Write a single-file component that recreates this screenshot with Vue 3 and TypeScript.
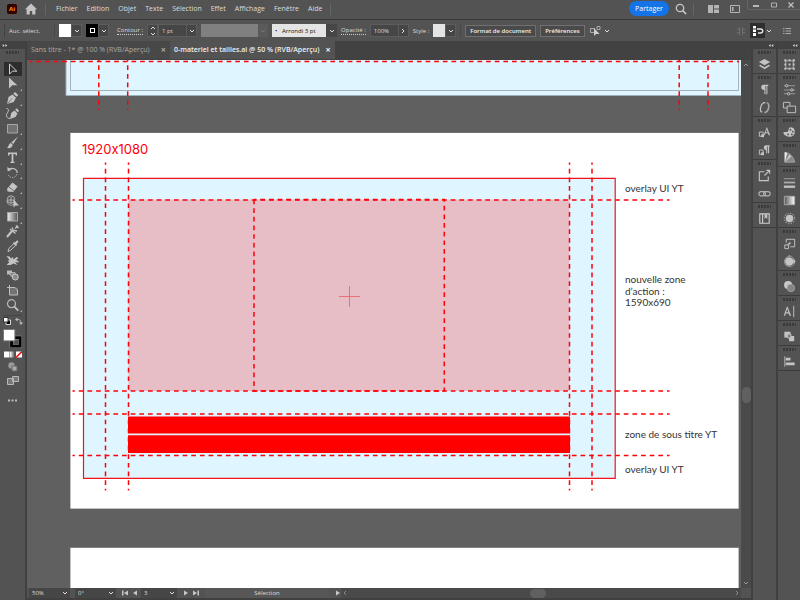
<script setup lang="ts">
import { ref } from 'vue'

interface Tool {
  name: string
  icon: string
  more?: boolean
}

const menus: string[] = ['Fichier', 'Edition', 'Objet', 'Texte', 'Sélection', 'Effet', 'Affichage', 'Fenêtre', 'Aide']

const tools: Tool[] = [
  { name: 'Sélection', icon: '<path d="M4.5 2v10l3-2.800h4.300z" fill="none" stroke="#d0d0d0"/>' },
  { name: 'Sélection directe', more: true, icon: '<path d="M4 1.500v11l3.300-3.200h5z"/>' },
  { name: 'Plume', more: true, icon: '<path d="M2 13l1.500-7 4-2.500 3.500 3.300-2.300 4.200zM8.300 2.700L10 1l3.200 3-1.500 1.800z"/><path d="M2.500 12.500L7 7.500" stroke="#535353" stroke-width=".7"/>' },
  { name: 'Courbure', icon: '<path d="M5 13l1.200-6 3.300-2.500 3 3-2 3.500zM10.200 3.800l1.300-1.600 2.700 2.600-1.500 1.500z"/><path d="M1.500 2.500c3 0 2 3 .5 5s0 5 3 5" fill="none" stroke="#c4c4c4"/>' },
  { name: 'Rectangle', more: true, icon: '<path d="M2.500 3.500h10v8.500h-10z" fill="#737373" stroke="#a6a6a6"/>' },
  { name: 'Pinceau', more: true, icon: '<path d="M13 1.500L8.200 9 6.300 7.500zM5.700 8l2 1.700c-.5 3-3 3.800-5.700 3.300 1.500-.8 1.200-3.800 3.700-5z"/>' },
  { name: 'Texte', more: true, icon: '<path d="M3 2.500h9V5.500h-1.200L10.300 4H8.400v7.500l1.300.8v.7H5.300v-.7l1.300-.8V4H4.700l-.5 1.500H3z"/>' },
  { name: 'Rotation', more: true, icon: '<path d="M3.500 5c3-3.500 9-1 8.700 3" fill="none" stroke="#c4c4c4" stroke-width="1.200"/><path d="M12 9c-1 4-7 5-8.700 1" fill="none" stroke="#a8a8a8" stroke-dasharray="1.500 1"/><path d="M2.300 2l.3 4.300 4-1.300z"/>' },
  { name: 'Gomme', more: true, icon: '<path d="M7.500 2.500l5 4-4.200 5.500-5.800-.5-.5-2.800z"/><path d="M4 7l5 4" stroke="#535353" stroke-width=".8"/>' },
  { name: 'Concepteur de forme', more: true, icon: '<g fill="none" stroke="#b4b4b4"><circle cx="6" cy="5.500" r="3.700"/><path d="M2 6.500c0 6 8 6 8 1M3 6h6M6 3v6"/></g><path d="M8.500 5.500v8l2-2h3.500z"/>' },
  { name: 'Dégradé', more: true, icon: '<defs><linearGradient id="tg"><stop stop-color="#eee"/><stop offset="1" stop-color="#555"/></linearGradient></defs><path d="M2.500 3.500h10V12h-10z" fill="url(#tg)" stroke="#aaa"/>' },
  { name: 'Cotes', icon: '<path d="M2 13l5-6" stroke="#c4c4c4" stroke-width="2"/><path d="M5 5l5.500 4.500M7 3.500l1.500 3 3.500.5M10 4.500L13 2M11 1.500l2.500 2.500" stroke="#c4c4c4" stroke-width="1.300" fill="none"/>' },
  { name: 'Pipette', icon: '<path d="M3 12.500l.8-3L9 4.500l1.800 1.800-5.300 5z" fill="none" stroke="#c4c4c4"/><path d="M8 4l1-1 1 .5 1.500-1.800c1.500-.7 2.200.5 1.500 1.800L11.500 5l.5 1-1 1z"/>' },
  { name: 'Marionnette', icon: '<path d="M1.500 3l3 .5L6 5.500l2-1.500.5 2.500 3-2.500 2 1-2.500 2 2.500 1v1.500L10 9l2.500 3-4-1.500-3 1.500H1.500L4.500 9 2.500 8l2-1z"/>' },
  { name: 'Dégradé de formes', icon: '<path d="M2 2.500h5v4H2z" fill="#b8b8b8"/><path d="M4.500 4.500H10l1 4H6z" fill="#8c8c8c" stroke="#c4c4c4" stroke-width=".7"/><circle cx="10.300" cy="9" r="3" fill="#8c8c8c" stroke="#c8c8c8"/>' },
  { name: 'Plan de travail', icon: '<path d="M4 4.500h8.500V12H4z" fill="#737373"/><path d="M2 4.500h8l2.500 2.500v5h-8V2" fill="none" stroke="#bdbdbd"/>' },
  { name: 'Zoom', more: true, icon: '<circle cx="6.500" cy="5.700" r="4" fill="none" stroke="#b8b8b8" stroke-width="1.200"/><path d="M9.300 8.700l4 4" stroke="#c4c4c4" stroke-width="1.800"/>' },
]

const dockA: Tool[][] = [
  [{ name: 'Calques', icon: '<path d="M8 2l6 3.300-6 3.400-6-3.400z"/><path d="M3.500 8.200L2 9.200 8 13l6-3.800-1.500-1L8 11z"/>' }],
  [
    { name: 'Paragraphe', icon: '<path d="M7 3h5v1.200h-.900V13H10V4.200H9V13H7.900V8.500C3.500 8.500 3.500 3 7 3z"/>' },
    { name: 'OpenType', icon: '<path d="M9 3C4 2 2 12 5.500 13" fill="none" stroke="#c4c4c4" stroke-width="1.300"/><path d="M8 13.500c5-1 6-10 2.500-10.500" fill="none" stroke="#aaa" stroke-width="1.700"/>' },
  ],
  [
    { name: 'Styles de caractères', icon: '<path d="M10.500 2L14 11h-1.500l-.8-2.200H9L8.200 11H7zm-.200 2.500L9.400 7.700h1.900z"/><path d="M2.500 7.500h4V12h-4z" fill="none" stroke="#c4c4c4"/><path d="M4.500 10h3v3h-3z"/>' },
    { name: 'Styles de paragraphes', icon: '<path d="M9.500 2.500h4V3.700h-.6V11h-1.200V3.700h-.8V11H9.700V7.500c-3.200 0-3.200-5-.2-5z"/><path d="M2.500 7.500h4V12h-4z" fill="none" stroke="#c4c4c4"/><path d="M4.500 10h3v3h-3z"/>' },
  ],
  [
    { name: 'Exportation', icon: '<path d="M8 4H2.500v9.500H12V9M10 2.500h3.500V6M13.500 2.500L8 8" fill="none" stroke="#c4c4c4" stroke-width="1.200"/>' },
    { name: 'Liens', icon: '<rect x="2" y="6" width="7" height="4.500" rx="2.200" fill="none" stroke="#b4b4b4" stroke-width="1.200"/><rect x="7" y="6" width="7" height="4.500" rx="2.200" fill="none" stroke="#b4b4b4" stroke-width="1.200"/>' },
  ],
  [{ name: 'Bibliothèques', icon: '<path d="M3 3h10v10H3zM6 3v10" fill="none" stroke="#d0d0d0" stroke-width="1.200"/><path d="M8 3.500h3v5L9.500 7 8 8.500z"/>' }],
]

const dockB: Tool[][] = [
  [{ name: 'Transformation', icon: '<path d="M4 4h8v8H4z" fill="none" stroke="#b0b0b0"/><path d="M2.500 2.500h2.200v2.200H2.500zM7 2.500h2v2H7zM11.500 2.500h2.200v2.200h-2.200zM2.500 7h2v2h-2zM11.500 7h2v2h-2zM2.500 11.500h2.200v2.200H2.500zM7 11.500h2v2H7zM11.500 11.500h2.200v2.200h-2.200zM7 7h2v2H7z"/>' }],
  [
    { name: 'Propriétés', icon: '<path d="M2 4h12M2 8.500h12M2 12.500h12" stroke="#9c9c9c"/><g fill="#535353" stroke="#c4c4c4"><circle cx="5" cy="4" r="1.300"/><circle cx="10.500" cy="8.500" r="1.300"/><circle cx="7" cy="12.500" r="1.300"/></g>' },
    { name: 'Pathfinder', icon: '<path d="M1.500 2.500h7v6h-7z" fill="none" stroke="#c4c4c4"/><path d="M5.500 6.500h9v7h-9z" fill="#535353" stroke="#c4c4c4"/>' },
  ],
  [{ name: 'Couleur', icon: '<path d="M9 2.500c4 0 5 3 4.500 6s-3 4.500-6 4-6-2.500-6-4 2-1 4-1 1-5 3.500-5z"/><g fill="#535353"><circle cx="9" cy="5" r="1"/><circle cx="11.500" cy="7" r="1"/><circle cx="10.500" cy="10" r="1"/><circle cx="6.500" cy="10" r="1"/></g>' }],
  [{ name: 'Guide des couleurs', icon: '<path d="M3 13V2.500C8 3 12.500 7 13.500 13z" fill="#888" stroke="#bbb" stroke-width=".7"/><path d="M3 13V2.500l2.500.7z" fill="#eee"/><path d="M3 13l5-8 2 2z" fill="#ccc"/>' }],
  [
    { name: 'Contour', icon: '<path d="M2 4h12" stroke="#a8a8a8"/><path d="M2 8h12" stroke="#a8a8a8" stroke-width="2"/><path d="M2 12.500h12" stroke="#c0c0c0" stroke-width="2.500"/>' },
    { name: 'Dégradé', icon: '<defs><linearGradient id="dg"><stop stop-color="#555"/><stop offset=".9" stop-color="#eee"/></linearGradient></defs><path d="M2.500 3.500h11v9h-11z" fill="url(#dg)" stroke="#aaa"/>' },
    { name: 'Transparence', icon: '<circle cx="8" cy="8" r="4"/><circle cx="8" cy="8" r="5.500" fill="none" stroke="#999" stroke-width="1.500" stroke-dasharray="1.300 1.580"/>' },
  ],
  [
    { name: 'Exportation de ressources', icon: '<path d="M4.500 7V3.500h9v8H9" fill="none" stroke="#c4c4c4"/><path d="M3 9.500h4v4H3z" fill="none" stroke="#c4c4c4"/><path d="M5 9l4-3v3z"/>' },
    { name: 'Redéfinir les couleurs', icon: '<circle cx="7.700" cy="8" r="4.500"/><circle cx="8" cy="8" r="5.500" fill="none" stroke="#999"/><path d="M12 5l2.500 3-2.500 3zM6.500 2l1.500-.8L9.500 2z"/>' },
  ],
  [{ name: 'Aspect', icon: '<circle cx="6.500" cy="6.500" r="4.300" fill="#c8c8c8"/><circle cx="9.500" cy="9.500" r="4" fill="#858585" stroke="#aaa" stroke-width=".7"/>' }],
  [{ name: 'Caractère', icon: '<path d="M6 3L9.700 12.500H8.100L7.200 10H4L3.100 12.500H1.800L5.200 3zm-.4 2L4.400 8.700h2.400z"/><path d="M12.500 2v12" stroke="#c4c4c4"/>' }],
  [{ name: 'Formes', icon: '<path d="M2.500 3h6.500v2.500H6V9H2.500z"/><path d="M7 6.500h2.500v1H13V13H7.500V9.500H7z" /><path d="M6 5.500h3.500v4H6z" fill="#777" stroke="#c4c4c4"/>' }],
  [{ name: 'Alignement', icon: '<path d="M3 2.500v11" stroke="#bbb"/><path d="M4 4h5v3H4zM4 9h9.500v3H4z"/>' }],
]

const fullDash = [105.5, 128.5, 569.5, 592]
const rowDash = [200, 391, 414, 455.6]

const activeTool = ref<string>('Sélection')
const strokeWeight = ref<string>('1 pt')
const opacity = ref<string>('100%')
</script>

<template>
  <div class="app">
    <header class="menubar">
      <span class="logo">Ai</span>
      <button class="plain" aria-label="Accueil">
        <svg class="home" viewBox="0 0 12 12"><path d="M6 .500L0 6.300h1.600V11.500h3.200V8h2.400v3.500h3.200V6.300H12z" /></svg>
      </button>
      <i class="rule"></i>
      <nav class="menus">
        <a v-for="m in menus" :key="m" href="#">{{ m }}</a>
      </nav>
      <i class="rule"></i>
      <div class="top-right">
        <button class="share">Partager</button>
        <button class="plain" aria-label="Rechercher">
          <svg class="s12" viewBox="0 0 12 12"><circle cx="5" cy="5" r="3.700" fill="none" stroke="#c8c8c8" stroke-width="1.300" /><path d="M7.700 7.700L11 11" stroke="#c8c8c8" stroke-width="1.700" /></svg>
        </button>
        <i class="rule"></i>
        <button class="plain layout" aria-label="Réorganiser">
          <svg class="s12" viewBox="0 0 12 12"><path d="M1 2h5v8H1zM7 2h5v3.500H7zM7 6.500h5V10H7z" fill="#b4b4b4" /></svg>
        </button>
        <button class="plain" aria-label="Espace de travail">
          <svg class="s12" viewBox="0 0 12 12"><path d="M1.500 2.500h9v7h-9z" fill="none" stroke="#b4b4b4" /><path d="M3 4h1.500v4H3z" fill="#b4b4b4" /></svg>
        </button>
        <div class="window-buttons">
          <button class="plain" aria-label="Réduire"><svg viewBox="0 0 10 10"><path d="M2 6h6" stroke="#b8b8b8" stroke-width="2" /></svg></button>
          <button class="plain" aria-label="Agrandir"><svg viewBox="0 0 10 10"><path d="M2.500 3h5v4h-5z" fill="none" stroke="#b0b0b0" /></svg></button>
          <button class="plain" aria-label="Fermer"><svg viewBox="0 0 10 10"><path d="M2.500 2.500l5 5m0-5l-5 5" stroke="#c0c0c0" stroke-width="1.200" /></svg></button>
        </div>
      </div>
    </header>

    <section class="control">
      <i class="handle"></i>
      <span class="status">Auc. sélect.</span>
      <i class="rule"></i>
      <div class="combo">
        <button class="swatch fill" aria-label="Fond"></button>
        <button class="chev" aria-label="Choisir le fond"><svg viewBox="0 0 8 8"><path d="M2 3l2 2 2-2" /></svg></button>
      </div>
      <div class="combo">
        <button class="swatch stroke" aria-label="Contour"><i></i></button>
        <button class="chev" aria-label="Choisir le contour"><svg viewBox="0 0 8 8"><path d="M2 3l2 2 2-2" /></svg></button>
      </div>
      <label class="lbl link contour" for="weight">Contour :</label>
      <div class="combo">
        <button class="chev" aria-label="Incrémenter"><svg class="tall" viewBox="0 0 8 12"><path d="M2 4l2-2 2 2M2 8l2 2 2-2" /></svg></button>
        <input id="weight" v-model="strokeWeight" class="field" />
        <button class="chev" aria-label="Épaisseurs"><svg viewBox="0 0 8 8"><path d="M2 3l2 2 2-2" /></svg></button>
      </div>
      <div class="pick profile">
        <select aria-label="Profil" disabled><option></option></select>
        <svg viewBox="0 0 8 8"><path d="M2 3l2 2 2-2" /></svg>
      </div>
      <div class="pick brush">
        <select aria-label="Forme"><option>•&nbsp;&nbsp; Arrondi 3 pt</option></select>
        <svg viewBox="0 0 8 8"><path d="M2 3l2 2 2-2" /></svg>
      </div>
      <label class="lbl link" for="opacity">Opacité :</label>
      <div class="combo">
        <input id="opacity" v-model="opacity" class="field" />
        <button class="chev" aria-label="Régler l’opacité"><svg viewBox="0 0 8 8"><path d="M3 2l2 2-2 2" /></svg></button>
      </div>
      <span class="lbl">Style :</span>
      <div class="combo">
        <button class="swatch style" aria-label="Style"></button>
        <button class="chev" aria-label="Choisir un style"><svg viewBox="0 0 8 8"><path d="M2 3l2 2 2-2" /></svg></button>
      </div>
      <i class="rule"></i>
      <button class="box">Format de document</button>
      <button class="box">Préférences</button>
      <button class="plain similar" aria-label="Sélectionner des objets similaires">
        <svg class="s12" viewBox="0 0 12 12"><path d="M1.500 3.500h4v4h-4zM8 1.500h3v3H8z" fill="none" stroke="#aaa" /><path d="M5 3v8l2-2h3.500z" fill="#d0d0d0" /></svg>
        <svg class="s8" viewBox="0 0 8 8"><path d="M2 3l2 2 2-2" /></svg>
      </button>
      <div class="control-end">
        <svg class="s8 dim" viewBox="0 0 8 8"><path d="M0 2.500h3M5 2.500h3M0 5.500h3M5 5.500h3M2.500 0v8M5.500 0v8" /></svg>
        <button class="plain snap" aria-label="Ancrage"><svg class="s12" viewBox="0 0 12 12"><path d="M1 1h3v2.500H1zM1 4.500h3V7H1zM1 8h3v3H1z" fill="#fff" /><path d="M5 4h3.500c3 0 3 4 0 4H6" fill="none" stroke="#e4e4e4" stroke-width="1.500" /></svg></button>
        <button class="plain" aria-label="Options d’ancrage"><svg class="s8" viewBox="0 0 8 8"><path d="M2 3l2 2 2-2" /></svg></button>
        <button class="plain list" aria-label="Menu du panneau"><svg class="s8" viewBox="0 0 8 8"><path d="M0 1.500h1.500M2.500 1.500H8M0 4h1.500M2.500 4H8M0 6.500h1.500M2.500 6.500H8" stroke="#aaa" /></svg></button>
      </div>
    </section>

    <main class="work">
      <aside class="toolbar">
        <button class="expander left" aria-label="Développer les outils"><svg viewBox="0 0 8 6"><path d="M1 1l2.500 2L1 5zM4.500 1L7 3 4.500 5z" /></svg></button>
        <i class="grip"></i>
        <div class="tools">
          <button v-for="t in tools" :key="t.name" class="tool" :class="{ on: t.name === activeTool, more: t.more }" :aria-label="t.name" @click="activeTool = t.name">
            <svg viewBox="0 0 15 15" v-html="t.icon"></svg>
          </button>
        </div>
        <div class="colors">
          <div class="pair">
            <button class="plain" aria-label="Fond et contour par défaut"><svg class="s8" viewBox="0 0 8 8"><path d="M3 3h4.500v4.500H3z" fill="#000" stroke="#ddd" /><path d="M.5.5H5V5H.5z" fill="#fff" stroke="#333" /></svg></button>
            <button class="plain" aria-label="Permuter"><svg class="s8" viewBox="0 0 8 8"><path d="M2 2.500c3-.3 4 1 4 4.500" fill="none" stroke="#bbb" /><path d="M0 2.500L2.500.5v4z" fill="#bbb" stroke="none" /><path d="M4 5.500h4L6 8z" fill="#bbb" stroke="none" /></svg></button>
          </div>
          <svg class="wells" viewBox="0 0 20 20"><path d="M9 9h9v9H9z" fill="none" stroke="#999" stroke-width="4" /><path d="M9 9h9v9H9z" fill="none" stroke="#000" stroke-width="3" /><path d="M.5 .5h12v12H.5z" fill="#fff" stroke="#777" /></svg>
          <svg class="modes" viewBox="0 0 18 7"><defs><linearGradient id="mg"><stop stop-color="#fff" /><stop offset="1" stop-color="#444" /></linearGradient></defs><path d="M0 .5h5.500v6H0z" fill="#fff" /><path d="M6 .5h5v6H6z" fill="url(#mg)" /><path d="M12 .5h6v6h-6z" fill="#fff" /><path d="M12 6.500l6-6" stroke="#f00" stroke-width="1.500" /></svg>
        </div>
        <button class="tool" aria-label="Dessin"><svg viewBox="0 0 15 15"><circle cx="6.500" cy="6.500" r="3.200" fill="#999" /><path d="M7 7h5v5H7z" fill="#aaa" stroke="#666" /></svg></button>
        <button class="tool screen" aria-label="Mode d’affichage"><svg viewBox="0 0 15 15"><path d="M2.500 5.500h6v6h-6zM7.500 3.500h6v5h-6z" fill="#777" stroke="#b8b8b8" /></svg></button>
        <button class="tool" aria-label="Modifier la barre d’outils"><svg viewBox="0 0 15 15"><path d="M3 6.500h2v2H3zM6.500 6.500h2v2h-2zM10 6.500h2v2h-2z" fill="#bbb" /></svg></button>
      </aside>

      <section class="document">
        <div class="tabs">
          <div class="tab"><a href="#">Sans titre - 1* @ 100 % (RVB/Aperçu)</a><button class="close" aria-label="Fermer l’onglet">×</button></div>
          <div class="tab on"><a href="#">0-materiel et tailles.ai @ 50 % (RVB/Aperçu)</a><button class="close" aria-label="Fermer l’onglet">×</button></div>
        </div>
        <div class="view">
          <div class="canvas">
            <svg class="art" role="img" aria-label="Plans de travail">
              <g transform="translate(-27 -60)">
                <path d="M66 55h676v40.500H66z" fill="#dff5ff" stroke="#9fb0ba" />
                <path d="M70.500 55v35.500h668V55" fill="none" stroke="#a5b0b8" />
                <g class="dash"><path d="M30 61.500h709" /><path d="M98.800 59v51M127.700 59v51M679.200 59v51M708 59v51" /></g>

                <path d="M70 132.500h669V509H70z" fill="#808080" />
                <path d="M70.500 133h668v375.500h-668z" fill="#fff" />
                <path d="M70 547h669v60H70z" fill="#808080" />
                <path d="M70.500 548h668v60h-668z" fill="#fff" />

                <path d="M83.500 178.300h531.700v300H83.500z" fill="#dff5ff" stroke="#f81218" stroke-width="1.200" />
                <path d="M128.500 199.500h441V391h-441z" fill="#e7bec6" />
                <path class="cross" d="M339 296.500h21M349.500 286v21" />
                <path d="M128 416.500h442v17H128zM128 435.300h442V453H128z" fill="#f00" />
                <g class="dash">
                  <path v-for="x in fullDash" :key="x" :d="`M${x} 162.500v328`" />
                  <path v-for="y in rowDash" :key="y" :d="`M72.500 ${y}h597`" />
                  <path d="M254 199.500h190.300V391H254z" />
                </g>
                <text class="size" x="82" y="154">1920x1080</text>
                <g class="note">
                  <text x="625" y="192">overlay UI YT</text>
                  <text x="625" y="283">nouvelle zone</text>
                  <text x="625" y="295">d’action :</text>
                  <text x="625" y="306">1590x690</text>
                  <text x="625" y="438">zone de sous titre YT</text>
                  <text x="625" y="473">overlay UI YT</text>
                </g>
              </g>
            </svg>
          </div>
          <div class="vscroll">
            <button class="arrow" aria-label="Défiler vers le haut"><svg class="s8" viewBox="0 0 8 8"><path d="M2 5l2-2 2 2" /></svg></button>
            <i class="before"></i><i class="thumb"></i><i class="after"></i>
            <button class="arrow" aria-label="Défiler vers le bas"><svg class="s8" viewBox="0 0 8 8"><path d="M2 3l2 2 2-2" /></svg></button>
          </div>
        </div>
        <footer class="statusbar">
          <div class="pick zoom"><select aria-label="Zoom"><option>50%</option></select><svg viewBox="0 0 8 8"><path d="M2 3l2 2 2-2" /></svg></div>
          <div class="pick zoom"><select aria-label="Rotation"><option>0°</option></select><svg viewBox="0 0 8 8"><path d="M2 3l2 2 2-2" /></svg></div>
          <div class="pager">
            <button class="plain" aria-label="Premier"><svg class="s8" viewBox="0 0 8 8"><path d="M1 1.500h1.500v5H1zM7 1.500v5L3 4z" class="solid" /></svg></button>
            <button class="plain" aria-label="Précédent"><svg class="s8" viewBox="0 0 8 8"><path d="M6 1.500v5L2 4z" class="solid" /></svg></button>
            <div class="pick board"><select aria-label="Plan de travail"><option>3</option></select><svg viewBox="0 0 8 8"><path d="M2 3l2 2 2-2" /></svg></div>
            <button class="plain" aria-label="Suivant"><svg class="s8" viewBox="0 0 8 8"><path d="M2 1.500v5L6 4z" class="solid" /></svg></button>
            <button class="plain" aria-label="Dernier"><svg class="s8" viewBox="0 0 8 8"><path d="M5.500 1.500H7v5H5.500zM1 1.500v5L5 4z" class="solid" /></svg></button>
          </div>
          <div class="mode">Sélection</div>
          <button class="plain" aria-label="Afficher"><svg class="s8" viewBox="0 0 8 8"><path d="M2 1.500v5L6 4z" class="solid" /></svg></button>
          <div class="hscroll">
            <button class="plain" aria-label="Défiler à gauche"><svg class="s8 faint" viewBox="0 0 8 8"><path d="M5 2L3 4l2 2" /></svg></button>
            <i class="track"></i><i class="thumb wide"></i><i class="track end"></i>
            <button class="plain" aria-label="Défiler à droite"><svg class="s8 faint" viewBox="0 0 8 8"><path d="M3 2l2 2-2 2" /></svg></button>
          </div>
          <i class="corner"></i>
        </footer>
      </section>

      <aside v-for="(dock, i) in [dockA, dockB]" :key="i" class="dock">
        <button class="expander" aria-label="Développer les panneaux"><svg viewBox="0 0 8 6"><path d="M3.500 1L1 3l2.500 2zM7 1L4.500 3 7 5z" /></svg></button>
        <div v-for="(group, g) in dock" :key="g" class="group">
          <i class="grip"></i>
          <button v-for="p in group" :key="p.name" class="panel" :aria-label="p.name"><svg viewBox="0 0 16 16" v-html="p.icon"></svg></button>
        </div>
      </aside>
    </main>
  </div>
</template>

<style>
body {
  background: #535353;
}
</style>

<style scoped>
.app {
  display: flex;
  flex-direction: column;
  height: 100vh;
  overflow: hidden;
  background: #535353;
  color: #dcdcdc;
  font: 7px/10px 'Open Sans', 'Noto Sans', sans-serif;
}
.app *, .app *::before, .app *::after {
  box-sizing: border-box;
}
button, input, select {
  margin: 0;
  padding: 0;
  border: 0;
  border-radius: 0;
  background: none;
  color: inherit;
  font: inherit;
  appearance: none;
}
a {
  color: inherit;
  text-decoration: none;
}
svg {
  display: block;
  flex: none;
  fill: #c4c4c4;
}
.s12 {
  width: 12px;
  height: 12px;
}
.s8 {
  width: 8px;
  height: 8px;
}
.s8, .chev svg, .pick svg {
  fill: none;
  stroke: #e0e0e0;
}
.s8.dim {
  stroke: #707070;
}
.s8.faint {
  stroke: #8a8a8a;
}
.solid {
  fill: #c8c8c8;
  stroke: none;
}
.plain {
  display: flex;
  align-items: center;
  justify-content: center;
}
.rule {
  flex: none;
  width: 1px;
  height: 12px;
  background: #656565;
}

.menubar {
  display: flex;
  align-items: center;
  flex: none;
  height: 20px;
  padding: 0 0 2px 7px;
  border-bottom: 1px solid #383838;
}
.logo {
  width: 10px;
  height: 10px;
  margin-right: 8px;
  border-radius: 2px;
  background: #330000;
  color: #ff9a00;
  font: 700 6px/10px 'Open Sans', sans-serif;
  text-align: center;
}
.home {
  width: 12px;
  height: 12px;
  margin-right: 8px;
}
.menus {
  display: flex;
  gap: 9px;
  padding: 0 8px 0 10px;
}
.top-right {
  display: flex;
  align-items: center;
  align-self: stretch;
  gap: 6px;
  margin-left: auto;
}
.share {
  height: 15px;
  padding: 0 6px;
  border-radius: 8px;
  background: #1473e6;
  color: #fff;
}
.layout {
  margin: 0 4px 0 7px;
}
.window-buttons {
  display: flex;
  justify-content: space-between;
  align-self: flex-start;
  width: 53px;
  height: 10px;
  padding: 0 4px 0 3px;
  border: solid #666;
  border-width: 0 0 1px 1px;
  border-radius: 0 0 0 3px;
}
.window-buttons svg {
  width: 10px;
  height: 10px;
}

.control {
  display: flex;
  align-items: center;
  flex: none;
  gap: 4px;
  height: 21px;
  padding-left: 3px;
  font-size: 6px;
}
.control .rule {
  background: #474747;
}
.handle {
  width: 2px;
  height: 13px;
  border-right: 1px dotted #333;
}
.status {
  width: 41px;
}
.combo {
  display: flex;
  height: 13px;
  background: #464646;
}
.swatch {
  display: flex;
  align-items: center;
  justify-content: center;
  width: 12px;
  height: 13px;
}
.swatch.fill {
  background: #fff;
}
.swatch.style {
  background: #e4e4e4;
}
.swatch.stroke {
  background: #000;
}
.swatch i {
  width: 5px;
  height: 5px;
  border: 1px solid #fff;
}
.chev {
  display: flex;
  align-items: center;
  justify-content: center;
  width: 11px;
  border: 1px solid #5c5c5c;
}
.chev svg {
  width: 8px;
  height: 8px;
}
.chev .tall {
  height: 12px;
}
.field {
  width: 28px;
  padding-left: 3px;
  border: 1px solid #5c5c5c;
  border-right: 0;
}
.lbl {
  white-space: nowrap;
}
.link {
  border-bottom: 1px dotted #ccc;
  line-height: 8px;
}
.contour {
  margin-left: 4px;
}
.pick {
  position: relative;
  height: 13px;
  background: #464646;
}
.pick select {
  width: 100%;
  height: 100%;
  padding-left: 3px;
}
.pick svg {
  position: absolute;
  top: 50%;
  right: 1px;
  width: 8px;
  height: 8px;
  margin-top: -4px;
  pointer-events: none;
}
.profile {
  width: 67px;
  padding-right: 10px;
  background: #5a5a5a;
}
.profile select {
  background: #808080;
  opacity: 1;
}
.profile svg {
  stroke: #777;
}
.brush {
  width: 65px;
  padding-right: 11px;
}
.brush select {
  background: #e4e4e4;
  color: #111;
}
.box {
  height: 12px;
  padding: 0 4px;
  border: 1px solid #707070;
  background: #4a4a4a;
  color: #f0f0f0;
  font-weight: 600;
  white-space: nowrap;
}
.similar {
  gap: 2px;
}
.control-end {
  display: flex;
  align-items: center;
  margin-left: auto;
  padding-right: 9px;
}
.snap {
  width: 15px;
  height: 15px;
  margin: 0 0 0 5px;
  background: #2e2e2e;
}
.list {
  margin-left: 10px;
}

.work {
  display: flex;
  flex: 1;
  min-height: 0;
  gap: 2px;
  background: #404040;
}
.toolbar, .dock {
  flex: none;
  width: 25px;
  background: #535353;
}
.dock {
  width: 23px;
}
.dock + .dock {
  width: 22px;
}
.expander {
  display: flex;
  align-items: center;
  justify-content: flex-end;
  width: 100%;
  height: 8px;
  padding: 0 2px;
  background: #424242;
}
.expander svg {
  width: 6px;
  height: 5px;
  fill: #d8d8d8;
}
.expander.left {
  justify-content: flex-start;
}
.grip {
  display: block;
  width: 13px;
  height: 3px;
  margin: 2px auto;
  background: repeating-linear-gradient(90deg, #3a3a3a 0 2px, #535353 2px 3px);
}
.toolbar {
  display: flex;
  flex-direction: column;
  align-items: center;
}
.tools {
  display: flex;
  flex-direction: column;
  justify-content: space-between;
  height: 257px;
  margin-top: 3px;
  padding: 3px 0;
  border-bottom: 1px solid #444;
}
.tool {
  position: relative;
  display: flex;
  align-items: center;
  justify-content: center;
  width: 18px;
  height: 14px;
}
.tool.on {
  background: #2d2d2d;
}
.tool svg {
  width: 15px;
  height: 15px;
}
.tool.more::after {
  content: '';
  position: absolute;
  right: 0;
  bottom: 0;
  border: 1px solid #b0b0b0;
  border-top-color: transparent;
  border-left-color: transparent;
}
.colors {
  display: flex;
  flex-direction: column;
  align-items: center;
  padding-top: 1px;
}
.pair {
  display: flex;
  gap: 4px;
}
.wells {
  width: 19px;
  height: 19px;
  margin-top: 4px;
}
.modes {
  width: 18px;
  height: 7px;
  margin: 3px 0 1px;
}
.screen {
  margin-bottom: 6px;
}

.document {
  display: flex;
  flex: 1;
  flex-direction: column;
  min-width: 0;
  padding-bottom: 2px;
}
.tabs {
  display: flex;
  flex: none;
  height: 19px;
  padding-bottom: 1px;
  background: #424242;
  color: #a8a8a8;
}
.tab {
  display: flex;
  align-items: center;
  justify-content: space-between;
  gap: 6px;
  min-width: 143px;
  padding: 0 4px;
  background: #484848;
  white-space: nowrap;
}
.tab.on {
  background: #535353;
  color: #f0f0f0;
  font-weight: 600;
}
.close {
  font: 700 9px/10px 'Open Sans', sans-serif;
}
.view {
  display: flex;
  flex: 1;
  min-height: 0;
}
.canvas {
  flex: 1;
  min-width: 0;
  overflow: hidden;
  background: #606060;
}
.art {
  width: 100%;
  height: 100%;
}
.dash path {
  fill: none;
  stroke: #ff0008;
  stroke-width: 1.5;
  stroke-dasharray: 4.7 3.950;
  stroke-dashoffset: 2.350;
}
.cross {
  stroke: #ee5a66;
  stroke-width: 0.800;
}
.size {
  fill: #ff0008;
  font: 13px Inter, sans-serif;
  font-feature-settings: 'calt' 0;
}
.note text {
  fill: #333;
  font: 10px Lato, sans-serif;
}
.vscroll {
  display: flex;
  flex-direction: column;
  align-items: center;
  width: 10px;
  background: #4a4a4a;
}
.arrow {
  height: 10px;
}
.arrow .s8 {
  stroke: #999;
}
.before {
  flex: 316;
}
.after {
  flex: 175;
}
.thumb {
  width: 9px;
  height: 16px;
  border-radius: 5px;
  background: #606060;
}
.statusbar {
  display: flex;
  flex: none;
  height: 10px;
  gap: 5px;
  padding-left: 2px;
  background: #535353;
  font-size: 6px;
}
.statusbar .pick {
  height: 10px;
}
.zoom {
  width: 41px;
}
.pager {
  display: flex;
  gap: 2px;
}
.board {
  width: 36px;
  margin-right: 3px;
}
.mode {
  width: 124px;
  background: #575757;
  text-align: center;
}
.hscroll {
  display: flex;
  flex: 1;
  align-items: center;
  margin-left: -6px;
  background: #4a4a4a;
}
.track {
  flex: 183;
}
.track.end {
  flex: 190;
}
.thumb.wide {
  width: 16px;
  height: 9px;
}
.corner {
  width: 10px;
  margin-left: -5px;
}

.group {
  display: flex;
  flex-direction: column;
  align-items: center;
  border-bottom: 1px solid #3c3c3c;
}
.panel {
  height: 18px;
}
.panel svg {
  width: 15px;
  height: 15px;
}
.group .grip {
  margin: 2px 0 1px;
}
</style>
